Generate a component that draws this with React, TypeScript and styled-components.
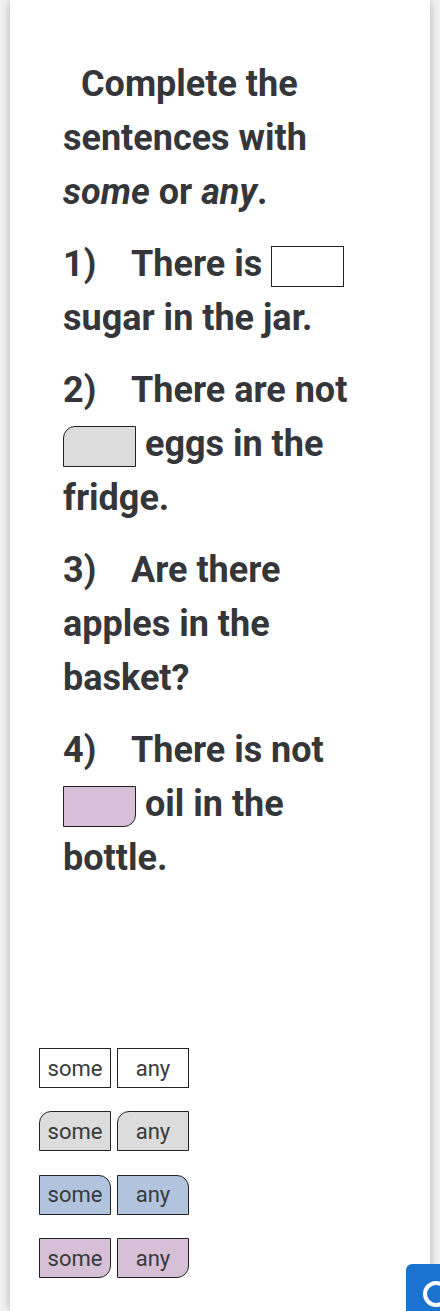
import React from 'react';
import styled, { createGlobalStyle } from 'styled-components';

const GlobalStyle = createGlobalStyle`
  html, body {
    margin: 0;
    padding: 0;
    background: #ffffff;
  }
  body {
    font-family: Roboto, "Liberation Sans", sans-serif;
    color: #333333;
  }
`;

type Shape = 'plain' | 'topLeft' | 'topRight' | 'bottomRight';

const radiusFor = (shape: Shape) =>
  shape === 'topLeft' && '12px 0 0 0' ||
  shape === 'topRight' && '0 12px 0 0' ||
  shape === 'bottomRight' && '0 0 12px 0' ||
  '0';

const Page = styled.div`
  position: relative;
  height: 1311px;
  overflow: hidden;
  background: #f4f4f4;
`;

const Card = styled.div`
  box-sizing: border-box;
  height: 100%;
  margin: 0 10px;
  padding: 57px 0 0 29px;
  background: #ffffff;
  box-shadow: 0 0 10px rgba(0, 0, 0, 0.28);
`;

const Sheet = styled.div`
  width: 300px;
  padding-left: 24px;
  font-size: 36px;
  font-weight: 700;
  line-height: 54px;
  color: #35363a;
`;

const Paragraph = styled.p<{ indent?: number }>`
  margin: 0 0 18px 0;
  text-indent: ${({ indent }) => (indent || 0) + 'px'};
`;

const Num = styled.span`
  display: inline-block;
  width: 66px;
  margin-right: 2px;
`;

const Blank = styled.span<{ fill: string; shape: Shape }>`
  display: inline-block;
  box-sizing: border-box;
  width: 73px;
  height: 41px;
  vertical-align: middle;
  border: 1px solid #222222;
  background: ${({ fill }) => fill};
  border-radius: ${({ shape }) => radiusFor(shape)};
`;

const Bank = styled.div`
  display: flex;
  flex-direction: column;
  gap: 23.4px;
  margin-top: 163px;
`;

const ChipRow = styled.div`
  display: flex;
  gap: 6px;
`;

const Chip = styled.div<{ fill: string; shape: Shape }>`
  box-sizing: border-box;
  display: flex;
  align-items: center;
  justify-content: center;
  width: 72px;
  height: 40px;
  border: 1px solid #222222;
  background: ${({ fill }) => fill};
  border-radius: ${({ shape }) => radiusFor(shape)};
  font-size: 22px;
  font-weight: 400;
  color: #3a3a3a;
`;

const FloatButton = styled.div`
  position: absolute;
  left: 406px;
  top: 1264px;
  width: 60px;
  height: 60px;
  border-radius: 6px;
  background: #1a73d0;
  display: flex;
  align-items: center;
  justify-content: center;
`;

const rows: { fill: string; shape: Shape }[] = [
  { fill: '#ffffff', shape: 'plain' },
  { fill: '#dcdcdc', shape: 'topLeft' },
  { fill: '#b0c4de', shape: 'topRight' },
  { fill: '#d8bfd8', shape: 'bottomRight' },
];

export default function App() {
  return (
    <Page>
      <GlobalStyle />
      <Card>
        <Sheet>
          <Paragraph indent={18}>
            Complete the sentences with <i>some</i> or <i>any</i>.
          </Paragraph>
          <Paragraph>
            <Num>1)</Num>There is <Blank fill="#ffffff" shape="plain" /> sugar in the jar.
          </Paragraph>
          <Paragraph>
            <Num>2)</Num>There are not <Blank fill="#dcdcdc" shape="topLeft" /> eggs in the fridge.
          </Paragraph>
          <Paragraph>
            <Num>3)</Num>Are there apples in the basket?
          </Paragraph>
          <Paragraph>
            <Num>4)</Num>There is not <Blank fill="#d8bfd8" shape="bottomRight" /> oil in the bottle.
          </Paragraph>
        </Sheet>
        <Bank>
          {rows.map((row, i) => (
            <ChipRow key={i}>
              <Chip fill={row.fill} shape={row.shape}>some</Chip>
              <Chip fill={row.fill} shape={row.shape}>any</Chip>
            </ChipRow>
          ))}
        </Bank>
      </Card>
      <FloatButton>
        <svg width="40" height="40" viewBox="0 0 40 40">
          <circle cx="20" cy="20" r="11" fill="none" stroke="#ffffff" strokeWidth="4" />
        </svg>
      </FloatButton>
    </Page>
  );
}
